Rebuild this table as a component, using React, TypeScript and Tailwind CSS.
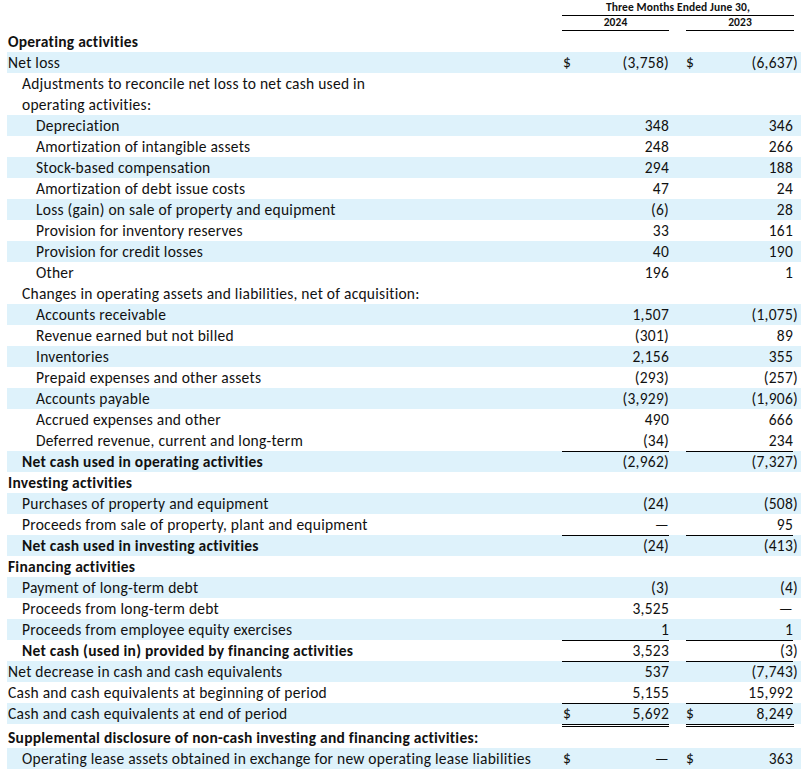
type Line = {
  label: string;
  indent?: 0 | 1 | 2;
  bold?: boolean;
  shade?: boolean;
  a?: string;
  b?: string;
  dollar?: boolean;
  rule?: boolean;
  double?: boolean;
  wrap?: string;
};

const rows: Line[] = [
  { label: "Operating activities", bold: true },
  { label: "Net loss", shade: true, a: "(3,758)", b: "(6,637)", dollar: true },
  { label: "Adjustments to reconcile net loss to net cash used in", wrap: "operating activities:", indent: 1 },
  { label: "Depreciation", indent: 2, shade: true, a: "348", b: "346" },
  { label: "Amortization of intangible assets", indent: 2, a: "248", b: "266" },
  { label: "Stock-based compensation", indent: 2, shade: true, a: "294", b: "188" },
  { label: "Amortization of debt issue costs", indent: 2, a: "47", b: "24" },
  { label: "Loss (gain) on sale of property and equipment", indent: 2, shade: true, a: "(6)", b: "28" },
  { label: "Provision for inventory reserves", indent: 2, a: "33", b: "161" },
  { label: "Provision for credit losses", indent: 2, shade: true, a: "40", b: "190" },
  { label: "Other", indent: 2, a: "196", b: "1" },
  { label: "Changes in operating assets and liabilities, net of acquisition:", indent: 1 },
  { label: "Accounts receivable", indent: 2, shade: true, a: "1,507", b: "(1,075)" },
  { label: "Revenue earned but not billed", indent: 2, a: "(301)", b: "89" },
  { label: "Inventories", indent: 2, shade: true, a: "2,156", b: "355" },
  { label: "Prepaid expenses and other assets", indent: 2, a: "(293)", b: "(257)" },
  { label: "Accounts payable", indent: 2, shade: true, a: "(3,929)", b: "(1,906)" },
  { label: "Accrued expenses and other", indent: 2, a: "490", b: "666" },
  { label: "Deferred revenue, current and long-term", indent: 2, a: "(34)", b: "234" },
  { label: "Net cash used in operating activities", indent: 1, bold: true, shade: true, rule: true, a: "(2,962)", b: "(7,327)" },
  { label: "Investing activities", bold: true },
  { label: "Purchases of property and equipment", indent: 1, shade: true, a: "(24)", b: "(508)" },
  { label: "Proceeds from sale of property, plant and equipment", indent: 1, a: "—", b: "95" },
  { label: "Net cash used in investing activities", indent: 1, bold: true, shade: true, rule: true, a: "(24)", b: "(413)" },
  { label: "Financing activities", bold: true },
  { label: "Payment of long-term debt", indent: 1, shade: true, a: "(3)", b: "(4)" },
  { label: "Proceeds from long-term debt", indent: 1, a: "3,525", b: "—" },
  { label: "Proceeds from employee equity exercises", indent: 1, shade: true, a: "1", b: "1" },
  { label: "Net cash (used in) provided by financing activities", indent: 1, bold: true, rule: true, a: "3,523", b: "(3)" },
  { label: "Net decrease in cash and cash equivalents", shade: true, rule: true, a: "537", b: "(7,743)" },
  { label: "Cash and cash equivalents at beginning of period", a: "5,155", b: "15,992" },
  { label: "Cash and cash equivalents at end of period", shade: true, rule: true, double: true, dollar: true, a: "5,692", b: "8,249" },
  { label: "Supplemental disclosure of non-cash investing and financing activities:", bold: true },
  { label: "Operating lease assets obtained in exchange for new operating lease liabilities", indent: 1, shade: true, dollar: true, a: "—", b: "363" },
];

const pad = ["pl-[1px]", "pl-[15px]", "pl-[29px]"];

function Amount({ v, hang }: { v?: string; hang?: boolean }) {
  if (!v) return null;
  if (hang && v.endsWith(")")) {
    return (
      <span className="flex whitespace-nowrap">
        {v.slice(0, -1)}
        <span className="w-0">)</span>
      </span>
    );
  }
  return <span>{v}</span>;
}

function Row({ r }: { r: Line }) {
  const cell = r.rule ? "border-t border-black" : "";
  return (
    <>
      <div className={`flex ${r.wrap ? "h-[42px]" : "h-[21px]"} ${r.shade ? "bg-[#def2fb]" : ""}`}>
        <div
          className={`flex-1 whitespace-nowrap ${pad[r.indent ?? 0]} ${r.bold ? "font-bold" : ""} ${
            r.wrap ? "leading-[21px]" : "flex items-center"
          }`}
        >
          {r.wrap ? (
            <>
              {r.label}
              <br />
              {r.wrap}
            </>
          ) : (
            r.label
          )}
        </div>
        <div className={`flex w-[107px] items-center justify-between ${cell}`}>
          <span className="pl-[1px]">{r.dollar ? "$" : ""}</span>
          <Amount v={r.a} />
        </div>
        <div className="w-[17px]" />
        <div className={`flex w-[107px] items-center justify-between ${cell}`}>
          <span>{r.dollar ? "$" : ""}</span>
          <Amount v={r.b} hang />
        </div>
        <div className="w-[8px]" />
      </div>
      {r.double && (
        <div className="flex h-[3px]">
          <div className="flex-1" />
          <div className="w-[107px] border-b-[3px] border-double border-black" />
          <div className="w-[17px]" />
          <div className="w-[108px] border-b-[3px] border-double border-black" />
          <div className="w-[7px]" />
        </div>
      )}
    </>
  );
}

export default function App() {
  return (
    <div className="h-[771px] w-[804px] overflow-hidden bg-white pl-[7px] pr-[3px] font-['Carlito','Lato',sans-serif] text-[15.5px] tracking-[0.25px] text-[#111]">
      <div className="flex h-[31px] flex-col items-end pr-[7px] text-[11.5px] font-bold tracking-[0.1px]">
        <div className="flex w-[232px] flex-col">
          <div className="flex h-[16px] items-center justify-center border-b border-black">Three Months Ended June 30,</div>
          <div className="flex h-[15px]">
            <div className="flex w-[107px] items-center justify-center border-b border-black">2024</div>
            <div className="w-[17px]" />
            <div className="flex w-[108px] items-center justify-center border-b border-black">2023</div>
          </div>
        </div>
      </div>
      {rows.map((r, i) => (
        <Row key={i} r={r} />
      ))}
    </div>
  );
}
